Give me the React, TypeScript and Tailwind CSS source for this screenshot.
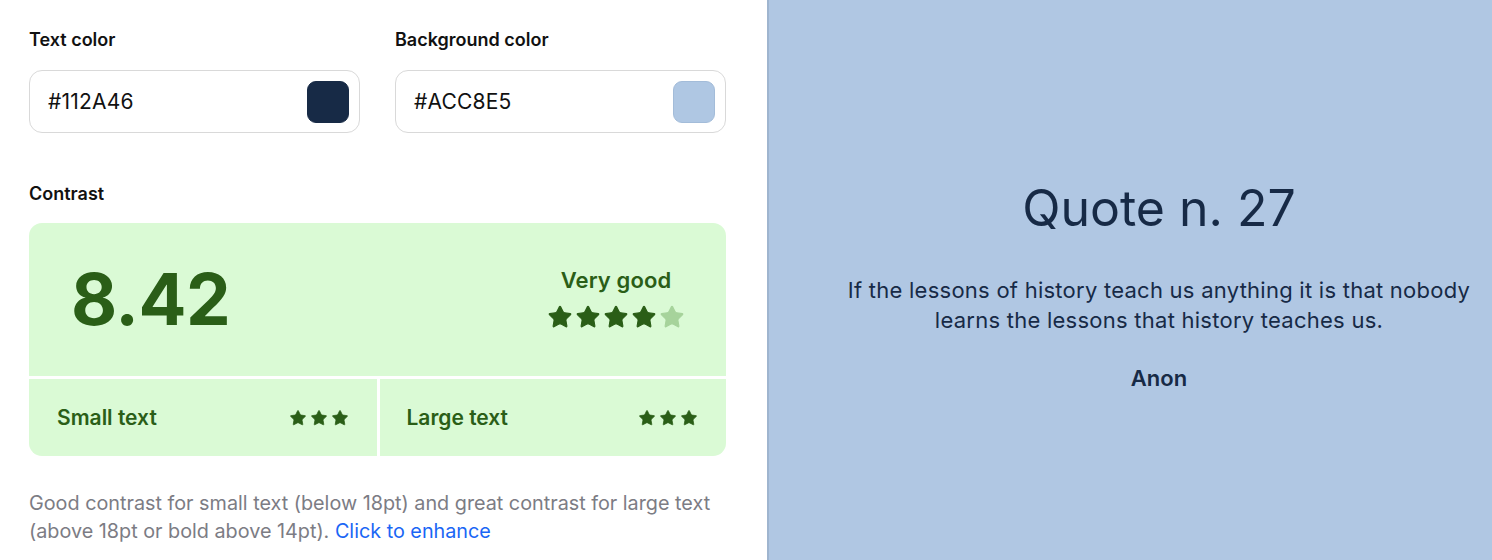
import { Star } from 'lucide-react'

const font = { fontFamily: 'Inter, "Noto Sans", sans-serif' }

function ColorField({ label, value, swatch }: { label: string; value: string; swatch: string }) {
  return (
    <div className="flex-1">
      <div className="text-[18px] leading-6 font-semibold text-[#111]">{label}</div>
      <div className="mt-[18px] h-[63px] rounded-[13px] border border-[#d9d9d9] bg-white flex items-center justify-between pl-[18px] pr-[10px]">
        <span className="text-[21px] tracking-[0.2px] text-[#111]">{value}</span>
        <span className={`w-[42px] h-[42px] rounded-[9px] border ${swatch}`} />
      </div>
    </div>
  )
}

function Stars({ count, filled, size, gap }: { count: number; filled: number; size: string; gap: string }) {
  return (
    <div className={`flex items-center ${gap}`}>
      {Array.from({ length: count }).map((_, i) => (
        <Star
          key={i}
          className={`${size} ${i < filled ? 'text-[#2a5e17] fill-[#2a5e17]' : 'text-[#a6d39b] fill-[#a6d39b]'}`}
          strokeWidth={1}
        />
      ))}
    </div>
  )
}

export default function App() {
  return (
    <main className="flex w-[1492px] h-[560px] overflow-hidden bg-white" style={font}>
      <div className="w-[767px] shrink-0 pl-[29px] pr-[41px] pt-[28px]">
        <div className="flex gap-[35px]">
          <ColorField label="Text color" value="#112A46" swatch="bg-[#172a46] border-[#172a46]" />
          <ColorField label="Background color" value="#ACC8E5" swatch="bg-[#afc7e3] border-[#a3bcd9]" />
        </div>

        <div className="mt-[49px] text-[18px] leading-6 font-semibold text-[#111]">Contrast</div>

        <div className="mt-[17px] rounded-[13px] overflow-hidden text-[#2a5e17]">
          <div className="h-[153px] bg-[#dafad5] flex items-center justify-between pl-[42px] pr-[41px]">
            <span className="text-[71px] font-bold leading-none tracking-[-0.5px]">8.42</span>
            <div className="flex flex-col items-center gap-[10px] mt-[-4px]">
              <span className="text-[22px] font-semibold leading-7 tracking-[0.1px]">Very good</span>
              <Stars count={5} filled={4} size="w-[26px] h-[26px]" gap="gap-[2px]" />
            </div>
          </div>
          <div className="h-[3px] bg-white" />
          <div className="flex h-[77px]">
            <div className="flex-1 bg-[#dafad5] flex items-center justify-between px-[28px]">
              <span className="text-[21px] font-semibold">Small text</span>
              <Stars count={3} filled={3} size="w-[18px] h-[18px]" gap="gap-[3px]" />
            </div>
            <div className="w-[3px] bg-white" />
            <div className="flex-1 bg-[#dafad5] flex items-center justify-between pl-[27px] pr-[28px]">
              <span className="text-[21px] font-semibold">Large text</span>
              <Stars count={3} filled={3} size="w-[18px] h-[18px]" gap="gap-[3px]" />
            </div>
          </div>
        </div>

        <p className="mt-[33px] -mr-[10px] text-[19.8px] leading-[28px] text-[#7c7c84]">
          Good contrast for small text (below 18pt) and great contrast for large text (above 18pt or bold above
          14pt). <span className="text-[#1a66f5]">Click to enhance</span>
        </p>
      </div>

      <div className="flex-1 bg-[#b0c7e3] border-l-2 border-[#9fb5cf] flex flex-col items-center justify-center pl-[57px] pt-[11px] text-[#172a46] text-center">
        <h1 className="text-[50px] leading-[60px]">Quote n. 27</h1>
        <p className="mt-[37px] text-[22px] leading-[30px] tracking-[0.25px]">
          If the lessons of history teach us anything it is that nobody
          <br />
          learns the lessons that history teaches us.
        </p>
        <p className="mt-[28px] text-[22px] leading-[30px] font-semibold">Anon</p>
      </div>
    </main>
  )
}
